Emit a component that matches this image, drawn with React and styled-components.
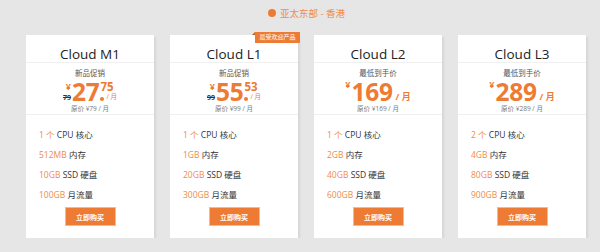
import React from 'react';
import styled, { createGlobalStyle } from 'styled-components';

const orange = '#ee7b33';

const GlobalStyle = createGlobalStyle`
  html, body {
    margin: 0;
    padding: 0;
    background: #e6e6e6;
  }
  body {
    font-family: 'Open Sans', 'Noto Sans CJK SC', sans-serif;
    color: #333;
  }
`;

const plans = [
  {
    name: 'Cloud M1',
    tag: '新品促销',
    price: '27',
    cents: '75',
    old: '79',
    specs: ['1 个', '512MB', '10GB', '100GB'],
  },
  {
    name: 'Cloud L1',
    tag: '新品促销',
    price: '55',
    cents: '53',
    old: '99',
    hot: true,
    specs: ['1 个', '1GB', '20GB', '300GB'],
  },
  {
    name: 'Cloud L2',
    tag: '最低到手价',
    price: '169',
    old: '169',
    specs: ['1 个', '2GB', '40GB', '600GB'],
  },
  {
    name: 'Cloud L3',
    tag: '最低到手价',
    price: '289',
    old: '289',
    specs: ['2 个', '4GB', '80GB', '900GB'],
  },
];

const specLabels = ['CPU 核心', '内存', 'SSD 硬盘', '月流量'];

const App = () => {
  return (
    <Page>
      <GlobalStyle />
      <Region>
        <RegionDot />
        亚太东部 - 香港
      </Region>
      <CardList>
        {plans.map(plan => (
          <Card key={plan.name}>
            {plan.hot && <Badge>最受欢迎产品</Badge>}
            <Title>{plan.name}</Title>
            <PriceBox>
              <Tag>{plan.tag}</Tag>
              {plan.cents ? (
                <PriceRow>
                  <Side>
                    <Yen>¥</Yen>
                    <Strike>{plan.old}</Strike>
                  </Side>
                  <Big>{plan.price}</Big>
                  <Frac>
                    <Cents>{plan.cents}</Cents>
                    <FracBottom>
                      <Dot />
                      <Per small>/ 月</Per>
                    </FracBottom>
                  </Frac>
                </PriceRow>
              ) : (
                <PriceRow>
                  <Yen top>¥</Yen>
                  <Big>{plan.price}</Big>
                  <Per>/ 月</Per>
                </PriceRow>
              )}
              <Original>原价 ¥{plan.old} / 月</Original>
            </PriceBox>
            <SpecList>
              {plan.specs.map((value, i) => (
                <SpecItem key={i}>
                  <SpecValue>{value}</SpecValue> {specLabels[i]}
                </SpecItem>
              ))}
            </SpecList>
            <BuyButton>立即购买</BuyButton>
          </Card>
        ))}
      </CardList>
    </Page>
  );
};

export default App;

const Page = styled.div`
  width: 561px;
  padding: 7px 0 0 26px;
`;

const Region = styled.div`
  display: flex;
  align-items: center;
  justify-content: center;
  gap: 4px;
  height: 12px;
  font-size: 9.5px;
  color: #ef8b4c;
  margin-bottom: 16px;
`;

const RegionDot = styled.span`
  width: 8px;
  height: 8px;
  border-radius: 50%;
  background: ${orange};
`;

const CardList = styled.div`
  display: grid;
  grid-template-columns: repeat(4, 128px);
  gap: 16px;
`;

const Card = styled.div`
  position: relative;
  background: #fff;
  box-shadow: 2px 2px 2px rgba(0, 0, 0, 0.07);
  display: flex;
  flex-direction: column;
  align-items: stretch;
  padding-bottom: 12px;
`;

const Badge = styled.div`
  position: absolute;
  top: -3px;
  right: -2px;
  width: 45px;
  height: 11px;
  background: ${orange};
  color: #fff;
  font-size: 6px;
  line-height: 11px;
  text-align: center;
  &::before {
    content: '';
    position: absolute;
    left: -3px;
    top: 0;
    border-bottom: 3px solid #c9601f;
    border-left: 3px solid transparent;
  }
`;

const Title = styled.div`
  height: 28px;
  padding-top: 10px;
  box-sizing: border-box;
  line-height: 18px;
  font-size: 13.5px;
  color: #222;
  text-align: center;
  border-bottom: 1px solid #f0f0f0;
`;

const PriceBox = styled.div`
  display: flex;
  flex-direction: column;
  align-items: center;
  height: 52px;
  padding-top: 3px;
  box-sizing: border-box;
  border-bottom: 1px solid #f0f0f0;
`;

const Tag = styled.div`
  font-size: 7.5px;
  line-height: 14px;
  color: #555;
`;

const PriceRow = styled.div`
  display: flex;
  align-items: flex-end;
  justify-content: center;
  height: 22px;
  color: ${orange};
`;

const Side = styled.div`
  display: flex;
  flex-direction: column;
  align-items: flex-end;
  height: 20px;
  justify-content: space-between;
  margin-right: 1px;
`;

const Yen = styled.span`
  font-size: 9px;
  font-weight: 700;
  line-height: 10px;
  align-self: ${props => (props.top ? 'flex-start' : 'auto')};
  margin-right: ${props => (props.top ? '1px' : '0')};
`;

const Strike = styled.span`
  font-size: 7px;
  font-weight: 700;
  line-height: 9px;
  color: #333;
  text-decoration: line-through;
`;

const Big = styled.span`
  font-size: 24.5px;
  font-weight: 700;
  line-height: 20px;
  letter-spacing: -0.3px;
`;

const Frac = styled.div`
  display: flex;
  flex-direction: column;
  height: 20px;
  justify-content: space-between;
  margin-left: 1px;
`;

const Cents = styled.span`
  font-size: 11.5px;
  font-weight: 700;
  line-height: 10px;
`;

const FracBottom = styled.div`
  display: flex;
  align-items: flex-end;
  gap: 2px;
`;

const Dot = styled.span`
  width: 4px;
  height: 4px;
  border-radius: 50%;
  background: ${orange};
  margin-bottom: 1px;
`;

const Per = styled.span`
  font-size: ${props => (props.small ? '6.5px' : '9px')};
  font-weight: ${props => (props.small ? 400 : 700)};
  line-height: 9px;
  margin-left: ${props => (props.small ? '0' : '3px')};
  margin-bottom: 1px;
`;

const Original = styled.div`
  font-size: 6.5px;
  line-height: 11px;
  color: #777;
  margin-top: 1px;
`;

const SpecList = styled.ul`
  list-style: none;
  margin: 0;
  padding: 10px 0 0 13px;
`;

const SpecItem = styled.li`
  font-size: 8.5px;
  line-height: 20px;
  color: #333;
`;

const SpecValue = styled.span`
  color: #f08a4c;
`;

const BuyButton = styled.button`
  align-self: center;
  width: 51px;
  height: 19px;
  margin-top: 2px;
  padding: 0;
  border: 1px solid #f6b88f;
  background: ${orange};
  color: #fff;
  font-family: 'Open Sans', 'Noto Sans CJK SC', sans-serif;
  font-size: 7px;
  font-weight: 700;
  cursor: pointer;
`;
